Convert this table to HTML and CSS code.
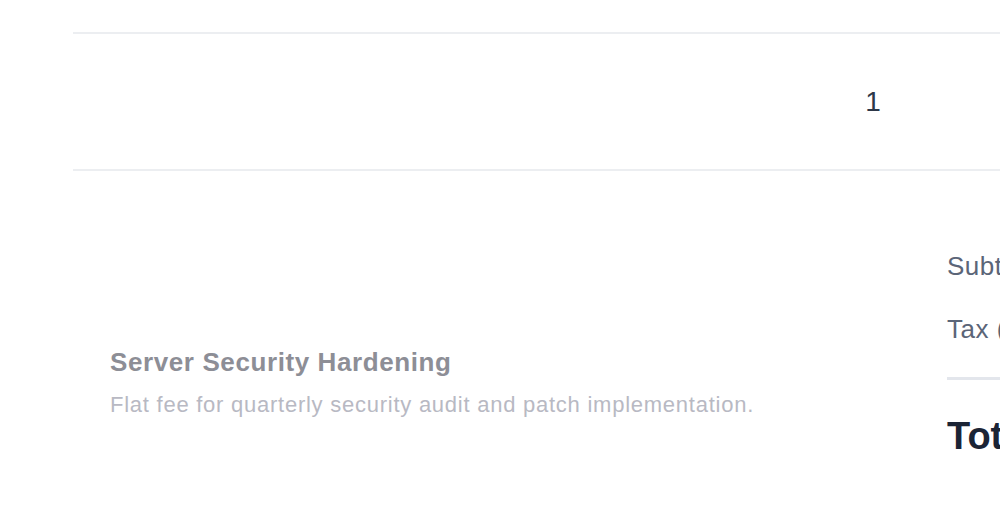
FILE: index.html
```html
<!DOCTYPE html>
<html>
<head>
<meta charset="utf-8">
<link rel="stylesheet" href="styles.css">
</head>
<body>
<div class="sheet">
  <div class="row row-first">
    <div class="cell-desc"><p class="line-desc">Monthly support covering priority response, uptime monitoring and reporting.</p></div>
  </div>
  <div class="row row-item">
    <div class="cell-desc"></div>
    <div class="cell-qty">1</div>
    <div class="cell-rate"></div>
  </div>
  <div class="footer">
    <div class="notes">
      <div class="note-title">Server Security Hardening</div>
      <div class="note-desc">Flat fee for quarterly security audit and patch implementation.</div>
    </div>
    <div class="totals">
      <div class="tot-line">Subtotal</div>
      <div class="tot-line tot-tax">Tax (8%)</div>
      <div class="tot-sep"></div>
      <div class="tot-grand">Total</div>
    </div>
  </div>
</div>
</body>
</html>
```
FILE: styles.css
```css
*, *::before, *::after {
  box-sizing: border-box;
}
html, body {
  margin: 0;
  padding: 0;
  background: #ffffff;
  overflow: hidden;
}
body {
  width: 1000px;
  height: 514px;
  font-family: "Liberation Sans", Arial, sans-serif;
}
.sheet {
  margin-top: -40px;
  margin-left: 73px;
  width: 1300px;
}
.row {
  display: flex;
  border-bottom: 2px solid #eceef1;
}
.row-first {
  height: 74px;
}
.row-first .cell-desc {
  padding-left: 37px;
}
.line-desc {
  margin: 0;
  padding-top: 16px;
  font-size: 22px;
  letter-spacing: 0.75px;
  line-height: 24px;
  color: #9a9ba3;
  white-space: nowrap;
}
.row-item {
  height: 137px;
  align-items: center;
}
.cell-desc {
  width: 760px;
}
.cell-qty {
  width: 80px;
  text-align: center;
  font-size: 28px;
  line-height: 32px;
  color: #2d3748;
}
.footer {
  display: flex;
  padding-top: 79px;
}
.notes {
  width: 874px;
  padding-left: 37px;
  padding-top: 96px;
}
.note-title {
  font-size: 26px;
  letter-spacing: 0.6px;
  font-weight: bold;
  color: #8d8e96;
  line-height: 32px;
}
.note-desc {
  margin-top: 13px;
  font-size: 22px;
  letter-spacing: 0.75px;
  color: #b8b9c3;
  line-height: 28px;
  white-space: nowrap;
}
.totals {
  width: 300px;
}
.tot-line {
  font-size: 26px;
  letter-spacing: 0.5px;
  color: #5b6578;
  line-height: 32px;
  white-space: nowrap;
}
.tot-tax {
  margin-top: 31px;
}
.tot-sep {
  margin-top: 32px;
  height: 3px;
  background: #e3e6ec;
}
.tot-grand {
  margin-top: 33px;
  font-size: 38px;
  font-weight: bold;
  color: #1b2435;
  line-height: 46px;
  white-space: nowrap;
}
```
